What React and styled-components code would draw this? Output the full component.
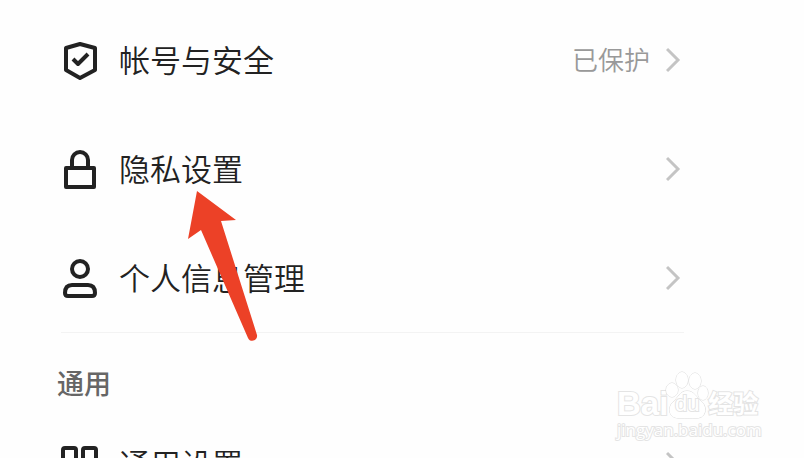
import React from "react"
import styled, {createGlobalStyle} from 'styled-components'

const GlobalStyle=createGlobalStyle`
body{
margin:0;
background-color:#fefefe;
font-family:"Noto Sans CJK SC","Noto Sans",sans-serif;
}
`
const Screen=styled.main`
position:relative;
height:100vh;
box-sizing:border-box;
padding:5px 120px 0 61px;
overflow:hidden;
`
const List=styled.ul`
margin:0;
padding:0;
list-style:none;
`
const Row=styled.button`
display:flex;
align-items:center;
width:100%;
height:109px;
padding:0;
border:none;
background:none;
color:#222;
font-family:inherit;
font-size:31px;
font-weight:350;
line-height:44px;
text-align:left;
cursor:pointer;
`
const RowLabel=styled.span`
flex:1;
margin-left:20px;
padding-bottom:2px;
`
const RowValue=styled.span`
margin-right:16px;
padding-bottom:2px;
color:#999;
font-size:26px;
`
const RowIcon=styled.svg`
flex:none;
width:38px;
height:42px;
fill:none;
stroke:#222;
stroke-width:4;
stroke-linejoin:round;
`
const Chevron=styled.svg`
flex:none;
width:18px;
height:26px;
fill:none;
stroke:#c4c4c4;
stroke-width:3;
`
const Divider=styled.hr`
height:1px;
margin:0;
border:none;
background-color:#f3f3f3;
`
const SectionTitle=styled.h2`
margin:0 0 0 -4px;
padding:35px 0 11px;
color:#666;
font-size:27px;
font-weight:500;
line-height:30px;
`
const Pointer=styled.svg`
position:absolute;
top:190px;
left:187px;
width:72px;
height:152px;
fill:#ec4127;
pointer-events:none;
`
const Watermark=styled.div`
position:absolute;
right:42px;
bottom:18px;
width:145px;
color:#fff;
white-space:nowrap;
-webkit-text-stroke:2px #e4e4e4;
paint-order:stroke fill;
pointer-events:none;
`
const Brand=styled.div`
display:flex;
align-items:flex-end;
`
const BrandText=styled.span`
font-family:"Liberation Sans",sans-serif;
font-size:33px;
font-weight:700;
line-height:32px;
`
const BrandName=styled.span`
font-size:25px;
font-weight:700;
line-height:36px;
`
const Paw=styled.span`
position:relative;
flex:none;
width:44px;
height:50px;
margin:0 -1px 0 -3px;
`
const PawShape=styled.svg`
display:block;
width:44px;
height:50px;
fill:#fff;
stroke:#d8d8d8;
stroke-width:1;
`
const PawText=styled.span`
position:absolute;
left:0;
right:0;
bottom:4px;
font-family:"Liberation Sans",sans-serif;
font-size:22px;
line-height:24px;
text-align:center;
`
const Site=styled.div`
font-family:"Open Sans",sans-serif;
font-size:17px;
line-height:20px;
`

const ShieldIcon=()=>(
        <RowIcon viewBox="0 0 38 42" aria-hidden="true">
                <path d="M19 5L5 9V31L19 39L34 31V9Z"/>
                <path d="M12 20L17 25L27 15"/>
        </RowIcon>
)
const LockIcon=()=>(
        <RowIcon viewBox="0 0 38 42" aria-hidden="true">
                <rect x="5" y="20" width="28" height="19"/>
                <path d="M11 20V12A8 8 0 0 1 27 12V20"/>
        </RowIcon>
)
const PersonIcon=()=>(
        <RowIcon viewBox="0 0 38 42" aria-hidden="true">
                <circle cx="19" cy="12" r="8"/>
                <path d="M4 36C4 31 6 28 11 28H27C32 28 34 31 34 36Q34 39 31 39H7Q4 39 4 36Z"/>
        </RowIcon>
)
const GridIcon=()=>(
        <RowIcon viewBox="0 0 38 42" aria-hidden="true">
                <rect x="2" y="5" width="13" height="13" rx="2"/>
                <rect x="22" y="5" width="13" height="13" rx="2"/>
                <rect x="2" y="25" width="13" height="13" rx="2"/>
                <rect x="22" y="25" width="13" height="13" rx="2"/>
        </RowIcon>
)

const SettingRow=({icon,label,value})=>(
        <li>
                <Row type="button">
                        {icon}
                        <RowLabel>{label}</RowLabel>
                        {value? <RowValue>{value}</RowValue>:<></>}
                        <Chevron viewBox="0 0 18 26" aria-hidden="true">
                                <path d="M1 2L12 13L1 24"/>
                        </Chevron>
                </Row>
        </li>
)

const App=()=>{
        return (
        <>
                <GlobalStyle/>
                <Screen>
                        <List>
                                <SettingRow icon={<ShieldIcon/>} label="帐号与安全" value="已保护"/>
                                <SettingRow icon={<LockIcon/>} label="隐私设置"/>
                                <SettingRow icon={<PersonIcon/>} label="个人信息管理"/>
                        </List>
                        <Divider/>
                        <SectionTitle>通用</SectionTitle>
                        <List>
                                <SettingRow icon={<GridIcon/>} label="通用设置"/>
                        </List>
                        <Pointer viewBox="0 0 72 152" aria-hidden="true">
                                <path d="M10 1L49 30L34 31L70 145C71 151 63 153 61 148L14 40L1 49Z"/>
                        </Pointer>
                        <Watermark>
                                <Brand>
                                        <BrandText>Bai</BrandText>
                                        <Paw>
                                                <PawShape viewBox="0 0 44 50" aria-hidden="true">
                                                        <ellipse cx="7" cy="20" rx="6" ry="7"/>
                                                        <ellipse cx="17" cy="10" rx="6" ry="8"/>
                                                        <ellipse cx="30" cy="11" rx="6" ry="8"/>
                                                        <ellipse cx="38" cy="23" rx="5" ry="7"/>
                                                        <path d="M22 21C29 21 31 27 36 31C43 37 41 48 32 48C27 48 17 48 13 48C4 48 2 38 8 32C13 28 15 21 22 21Z"/>
                                                </PawShape>
                                                <PawText>du</PawText>
                                        </Paw>
                                        <BrandName>经验</BrandName>
                                </Brand>
                                <Site>jingyan.baidu.com</Site>
                        </Watermark>
                </Screen>
        </>
        )
}
export default App
